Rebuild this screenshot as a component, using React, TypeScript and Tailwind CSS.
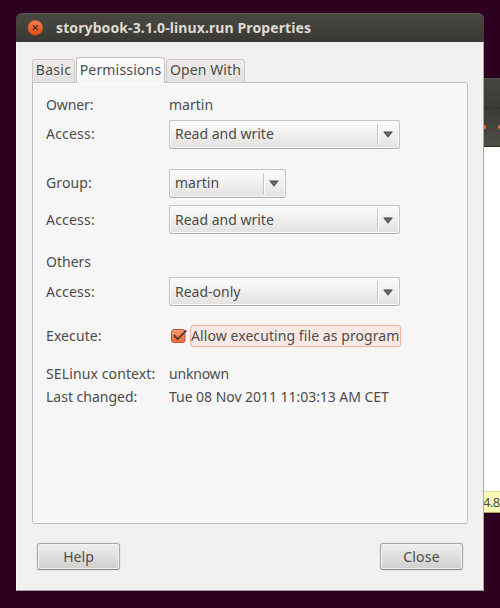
import React from "react";

function Label({ children, className = "" }: { children: string; className?: string }) {
  return <span className={`whitespace-pre ${className}`}>{children}</span>;
}

function Row({
  label,
  labelClass = "",
  className = "",
  children,
}: {
  label: string;
  labelClass?: string;
  className?: string;
  children?: React.ReactNode;
}) {
  return (
    <div className={`flex items-center ${className}`}>
      <div className="flex w-[123px] shrink-0">
        <Label className={labelClass}>{label}</Label>
      </div>
      {children}
    </div>
  );
}

function Select({ value, className = "" }: { value: string; className?: string }) {
  return (
    <button
      className={`flex h-[29px] items-center rounded-[3px] border border-[#c5c2bf] border-b-[#aaa6a2] bg-linear-to-b from-[#fcfcfb] to-[#e4e2e0] pl-[5px] shadow-[inset_0_0_0_1px_#fafaf9,0_1px_0_#fff] ${className}`}
    >
      <Label>{value}</Label>
      <span className="ml-auto h-[21px] w-px bg-[#c9c7c4]" />
      <span className="flex h-[21px] w-[21px] items-center border-l border-white pt-px pl-[4px]">
        <svg width="10" height="7" viewBox="0 0 10 7">
          <path d="M0.1 0.4H9.9L5 6.7Z" fill="#4b4b49" />
          <path d="M2.5 1.8H7.5L5 5Z" fill="#71716f" />
        </svg>
      </span>
    </button>
  );
}

function ActionButton({ children, textClass = "" }: { children: string; textClass?: string }) {
  return (
    <button className="flex h-[27px] w-[83px] items-center justify-center rounded-[3px] border border-[#aaa8a5] border-b-[#858380] bg-linear-to-b from-[#efefee] to-[#cfcfce] shadow-[inset_0_0_0_1px_#f3f3f2,0_0_0_1px_#eae8e6]">
      <Label className={textClass}>{children}</Label>
    </button>
  );
}

export default function App() {
  return (
    <div className="relative h-[608px] w-[500px] overflow-hidden bg-[#2c001e] font-['Noto_Sans','Open_Sans',sans-serif] text-[14px] leading-[20px] text-[#4c4c4c]">
      <div className="absolute top-[78px] left-[484px] w-4">
        <div className="h-[30px] border-t border-[#4f4e49] bg-linear-to-b from-[#45443f] to-[#3b3a36]" />
        <div className="flex h-[39px] items-center justify-between overflow-hidden border-t border-b border-t-[#33322e] border-b-[#2d2c29] bg-linear-to-b from-[#3c3b37] to-[#4e4d46] pb-px">
          <span className="-ml-px h-[4px] w-[3px] rounded-full bg-[#ed6b35]" />
          <span className="-mr-px h-[4px] w-[3px] rounded-full bg-[#ed6b35]" />
        </div>
        <div className="h-[344px] bg-white" />
        <div className="h-[22px] border-y border-t-[#dfdc8f] border-b-[#aaa765] bg-[#fcfbb5]">
          <Label className="-ml-px text-[13px] tracking-[-0.6px]">4.8</Label>
        </div>
      </div>

      <div className="absolute top-[13px] left-[16px] flex h-[578px] w-[468px] flex-col">
        <header className="flex h-[29px] shrink-0 items-center rounded-t-[6px] border-t border-[#5b5a51] bg-linear-to-b from-[#494842] to-[#3a3935] pl-[11px]">
          <svg width="16" height="16" viewBox="0 0 16 16" className="shrink-0">
            <defs>
              <linearGradient id="close" x1="0" y1="0" x2="0" y2="1">
                <stop offset="0" stopColor="#f58055" />
                <stop offset="1" stopColor="#df4c12" />
              </linearGradient>
            </defs>
            <circle cx="8.3" cy="7.7" r="7.5" fill="url(#close)" stroke="#b5461c" strokeWidth="0.4" />
            <path d="M5.8 5.2L10.8 10.2M10.8 5.2L5.8 10.2" stroke="#4a2113" strokeWidth="1.2" />
          </svg>
          <Label className="ml-[13px] font-bold tracking-[0.11px] text-[#dfdbd2]">storybook-3.1.0-linux.run Properties</Label>
        </header>

        <main className="flex flex-1 flex-col border-r border-b border-l border-r-[#a9a7a4] border-b-[#a09e9a] border-l-[#f7f6f5] bg-[#f2f1f0] px-[15px] pt-[15px]">
          <nav className="z-10 -mb-px flex h-[26px] items-end">
            <div className="flex h-[24px] w-[43px] justify-center rounded-t-[3px] border border-[#cac7c4] bg-linear-to-b from-[#eeedec] to-[#e4e2e0]">
              <Label className="tracking-[0.3px]">Basic</Label>
            </div>
            <div className="ml-px flex h-[26px] w-[89px] justify-center rounded-t-[3px] border border-b-0 border-[#c4c1be] bg-linear-to-b from-white to-[#f6f6f6] pt-[2px]">
              <Label className="tracking-[0.17px]">Permissions</Label>
            </div>
            <div className="ml-px flex h-[24px] w-[79px] justify-center rounded-t-[3px] border border-[#cac7c4] bg-linear-to-b from-[#eeedec] to-[#e4e2e0]">
              <Label className="tracking-[0.1px]">Open With</Label>
            </div>
          </nav>

          <section className="h-[442px] w-[436px] rounded-b-[3px] rounded-tr-[3px] border border-[#bdbab7] bg-[#f6f6f6] px-[13px] pt-[10px] shadow-[inset_0_0_0_1px_#fff]">
            <Row label="Owner:" labelClass="tracking-[-0.1px]" className="h-[24px]">
              <Label>martin</Label>
            </Row>
            <Row label="Access:" labelClass="tracking-[0.2px]" className="mt-[2px] h-[30px]">
              <Select value="Read and write" className="w-[231px]" />
            </Row>
            <Row label="Group:" labelClass="tracking-[0.1px]" className="mt-[19px] h-[30px]">
              <Select value="martin" className="w-[117px]" />
            </Row>
            <Row label="Access:" labelClass="tracking-[0.2px]" className="mt-[7px] h-[29px]">
              <Select value="Read and write" className="w-[231px]" />
            </Row>
            <Row label="Others" className="mt-[16px] h-[24px]" />
            <Row label="Access:" labelClass="tracking-[0.2px]" className="mt-[3px] h-[29px]">
              <Select value="Read-only" className="w-[231px]" />
            </Row>
            <Row label="Execute:" labelClass="tracking-[0.1px]" className="mt-[18px] h-[24px]">
              <svg width="20" height="20" viewBox="0 0 20 20" className="shrink-0">
                <defs>
                  <linearGradient id="check" x1="0" y1="0" x2="0" y2="1">
                    <stop offset="0" stopColor="#f79a72" />
                    <stop offset="1" stopColor="#ed6a3c" />
                  </linearGradient>
                </defs>
                <rect x="2.5" y="3.5" width="13.5" height="13" rx="2.5" fill="url(#check)" stroke="#b5573a" />
                <path d="M5 9.2L8.6 13.2L17.4 4.3" fill="none" stroke="#533a30" strokeWidth="1.9" />
              </svg>
              <div className="ml-px flex h-[22px] w-[211px] items-center rounded-[3px] border border-[#f4b298] bg-[#f8e8e3]">
                <Label className="tracking-[0.08px]">Allow executing file as program</Label>
              </div>
            </Row>
            <Row label="SELinux context:" labelClass="tracking-[0.12px]" className="mt-[14px] h-[24px]">
              <Label className="tracking-[-0.2px]">unknown</Label>
            </Row>
            <Row label="Last changed:" className="h-[22px]">
              <Label className="tracking-[-0.04px]">Tue 08 Nov 2011 11:03:13 AM CET</Label>
            </Row>
          </section>

          <footer className="mt-[19px] flex justify-between pr-[5px] pl-[5px]">
            <ActionButton>Help</ActionButton>
            <ActionButton textClass="tracking-[0.2px]">Close</ActionButton>
          </footer>
        </main>
      </div>
    </div>
  );
}
